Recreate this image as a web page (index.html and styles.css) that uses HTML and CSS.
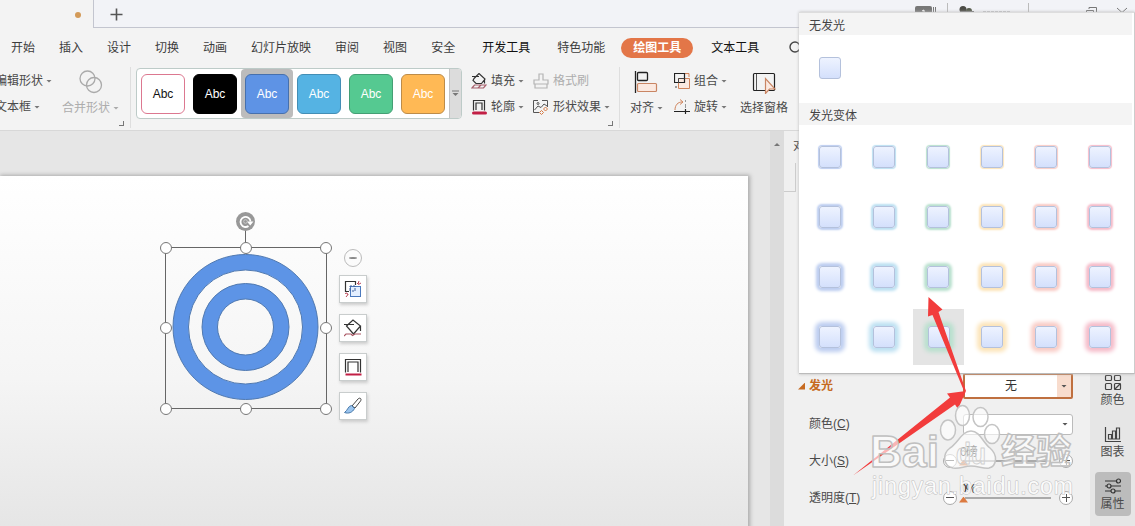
FILE: index.html
```
<!DOCTYPE html>
<html lang="zh-CN">
<head>
    <meta charset="UTF-8">
    <meta name="viewport" content="width=device-width, initial-scale=1.0">
    <title>绘图工具</title>
    <link rel="stylesheet" href="styles.css">
</head>
<body>
    <header class="titlebar">
        <div class="doc-tab"><span class="unsaved"></span></div>
        <div class="tab-strip">
            <svg class="plus" width="13" height="13"><path d="M6.5 0.5V12.5M0.5 6.5H12.5" stroke="#555" stroke-width="1.6"/></svg>
            <svg class="window-tools" width="224" height="22" fill="none">
                <rect x="4" y="6" width="17" height="14" rx="2" fill="#777"/>
                <path d="M11 11l2-1v10" stroke="#fff"/>
                <path d="M22.500 7v12M24.500 7v12" stroke="#777"/>
                <path d="M36.500 3v18M117.500 3v18" stroke="#bbb"/>
                <circle cx="52" cy="9.500" r="3.500" fill="#4b4b45"/><circle cx="58" cy="11" r="3" fill="#555b4b"/><path d="M49 12.500h14" stroke="#777" stroke-width="3"/>
                <path d="M72 12.500h28" stroke="#999" stroke-width="2" stroke-dasharray="3 1"/>
                <path d="M178 9V7.500h7.500v7h-3M175.500 10.500h7v8h-7z" stroke="#777"/>
                <path d="M206 8l10 9M216 8l-10 9" stroke="#777"/>
            </svg>
        </div>
    </header>

    <nav class="menu">
        <span>开始</span><span>插入</span><span>设计</span><span>切换</span><span>动画</span><span>幻灯片放映</span><span>审阅</span><span>视图</span><span>安全</span>
        <span class="dark wide">开发工具</span><span class="wide">特色功能</span>
        <span class="active">绘图工具</span><span class="dark">文本工具</span>
        <svg class="search" width="14" height="14" fill="none" stroke="#444" stroke-width="1.4"><circle cx="6" cy="6" r="5"/><path d="M10 10l3 3"/></svg>
    </nav>

    <section class="ribbon">
        <div class="group group-edit">
            <div class="stack">
                <div class="tool">编辑形状<i class="caret"></i></div>
                <div class="tool">文本框<i class="caret"></i></div>
            </div>
            <div class="big-tool disabled">
                <svg width="24" height="24" fill="none" stroke="#aaa" stroke-width="1.300"><circle cx="8.500" cy="8.500" r="7.500"/><circle cx="15" cy="15" r="7.500"/></svg>
                <div class="tool">合并形状<i class="caret"></i></div>
            </div>
            <i class="corner"></i>
        </div>

        <div class="gallery">
            <div class="cell"><b class="swatch pink">Abc</b></div>
            <div class="cell"><b class="swatch black">Abc</b></div>
            <div class="cell selected"><b class="swatch blue">Abc</b></div>
            <div class="cell"><b class="swatch sky">Abc</b></div>
            <div class="cell"><b class="swatch green">Abc</b></div>
            <div class="cell"><b class="swatch orange">Abc</b></div>
            <div class="more"><svg width="7" height="7"><path d="M0 1h7" stroke="#777"/><path d="M0.500 3h6l-3 3z" fill="#777"/></svg></div>
        </div>

        <div class="group group-style">
            <div class="stack">
                <div class="tool">
                    <svg width="16" height="16" fill="none" stroke="#333" stroke-width="1.200"><path d="M1 3.500h7M3 5.500l5-5 6 5.500-3.500 4.500H5L2 7.500zM13.500 6v4.500"/><path d="M1 15l2.500-3H15l-2.500 3zM7 15l3-3" stroke="#a6606c"/></svg>
                    填充<i class="caret"></i>
                </div>
                <div class="tool">
                    <svg width="16" height="16" fill="none" stroke="#333" stroke-width="1.200"><path d="M2.500 11.500V1.500h11v10M5 11V4h6v7"/><path d="M2.500 14h12" stroke="#c21f45" stroke-width="3" stroke-linecap="round"/></svg>
                    轮廓<i class="caret"></i>
                </div>
            </div>
            <div class="stack">
                <div class="tool disabled">
                    <svg width="16" height="16" fill="none" stroke="#b5b5b5" stroke-width="1.200"><path d="M6 7V1h4v6h5v4H1V7zM2 11v4h12v-4"/></svg>
                    格式刷
                </div>
                <div class="tool">
                    <svg width="16" height="16" fill="none" stroke="#555"><path d="M5 1.500H.5V13.500H6M9 1.500h5.500V8M1.500 11l3.500-4 3 1.500L11 5l3 2"/><circle cx="5" cy="4.500" r="1"/><path d="M12.500 8l2 2-2 2-2-2zM8.500 11.500l2 2-2 2-2-2z" stroke="#d57942"/></svg>
                    形状效果<i class="caret"></i>
                </div>
            </div>
            <i class="corner"></i>
        </div>

        <div class="group group-arrange">
            <div class="big-tool align">
                <svg width="24" height="24" fill="none"><path d="M1.500 1v22" stroke="#222" stroke-width="1.300"/><rect x="3.500" y="2.500" width="10" height="8" rx="1" stroke="#222" stroke-width="1.300"/><rect x="3.500" y="13.500" width="19" height="8" rx="1" fill="#fbe9e0" stroke="#c98563" stroke-width="1.200"/></svg>
                <div class="tool">对齐<i class="caret"></i></div>
            </div>
            <div class="stack">
                <div class="tool">
                    <svg width="16" height="16" fill="none"><path d="M4.500 5.500h11v10h-11zM10 .5h5V4" stroke="#d0845c" fill="#fbe9e0"/><path d="M.5.500h10v9H.5z" stroke="#222" stroke-width="1.200"/><path d="M4.500 10V5.500h6M1 14h2" stroke="#444"/></svg>
                    组合<i class="caret"></i>
                </div>
                <div class="tool">
                    <svg width="16" height="16" fill="none"><path d="M1 11C1 6 4 3 8 3M6 .5L9 3 6 5.500" stroke="#d0845c"/><path d="M0 12.500h16M11.500 10v5" stroke="#222" stroke-width="1.200"/><path d="M11.500 1v2M11.500 5v4" stroke="#999"/></svg>
                    旋转<i class="caret"></i>
                </div>
            </div>
            <div class="big-tool">
                <svg width="24" height="24" fill="none"><rect x="1.500" y="3.500" width="21" height="17" rx="1" stroke="#222" stroke-width="1.200"/><path d="M4.500 4v16" stroke="#555"/><path d="M13.500 8.500v15l4-4.500h5.500z" fill="#fbe9e0" stroke="#c98563" stroke-width="1.200"/></svg>
                <div class="tool">选择窗格</div>
            </div>
        </div>
    </section>

    <main class="workspace">
        <div class="canvas">
            <div class="slide">
                <svg class="shape" width="170" height="205" fill="none">
                    <g fill="#5d94e6" stroke="#5079b0" fill-rule="evenodd">
                        <path d="M13 122a72.500 72.500 0 1 1 145 0a72.500 72.500 0 1 1-145 0zM28.500 122a57 57 0 1 0 114 0a57 57 0 1 0-114 0z"/>
                        <path d="M42 122a43.500 43.500 0 1 1 87 0a43.500 43.500 0 1 1-87 0zM57.500 122a28 28 0 1 0 56 0a28 28 0 1 0-56 0z"/>
                    </g>
                    <path d="M5.500 42.500h161v161H5.500zM85.500 24v18" stroke="#666"/>
                    <circle cx="85.500" cy="16.500" r="9.500" fill="#989898"/>
                    <path d="M88.500 21a5 5 0 1 1 2-4.500" stroke="#fff" stroke-width="1.800"/><path d="M87 16.500h6.500l-3.300 4z" fill="#fff"/><circle cx="85.500" cy="16.500" r="1.800" stroke="#ccc"/>
                </svg>
                <i class="handle nw"></i><i class="handle n"></i><i class="handle ne"></i>
                <i class="handle w"></i><i class="handle e"></i>
                <i class="handle sw"></i><i class="handle s"></i><i class="handle se"></i>
                <div class="float-tools">
                    <span class="collapse"></span>
                    <span class="float-btn"><svg width="18" height="18" fill="none"><rect x="6.500" y="6.500" width="10" height="10" fill="#e4efff" stroke="#4b79bd"/><path d="M5 11.500H1.500v-10h10V5" stroke="#333" stroke-width="1.200"/><path d="M6 11V6h5v5H8" stroke="#3f5f9a" stroke-dasharray="3 1"/><path d="M13 3l1.500 1.500L17 3M15 1l-1 3M1 13.500l2-.500 1 2M2 17l2-2.500" stroke="#bb4658"/></svg></span>
                    <span class="float-btn"><svg width="18" height="18" fill="none"><path d="M0 5.500h10M2.500 7L9 1l7.500 6-7 8zM16.500 7v5" stroke="#333" stroke-width="1.200"/><path d="M0 17l2-2h5l1.500 1.500L11 15h6" stroke="#a95562" stroke-width="1.200"/></svg></span>
                    <span class="float-btn"><svg width="18" height="18" fill="none"><path d="M1.500 14.500V1.500h15v13M4 14V4h10v10" stroke="#333" stroke-width="1.200"/><path d="M1.500 16.500h16" stroke="#c21f45" stroke-width="2"/></svg></span>
                    <span class="float-btn"><svg width="18" height="18" fill="none"><path d="M8 9l6-7c2-2 4 0 2.500 2L11 11z" stroke="#444"/><path d="M7.500 8.500C4 9 4 13 .5 15.500c4 1.500 8 0 10-4z" fill="#9ac4ee" stroke="#4778a9"/></svg></span>
                </div>
            </div>
        </div>
        <div class="scrollbar"><i class="up"></i></div>
        <aside class="panel">
            <div class="panel-top"><span>对象属性</span><div class="panel-tab"></div></div>
            <div class="row heading"><i class="fold"></i><strong>发光</strong><div class="select open"><span>无</span><b><i class="caret"></i></b></div></div>
            <div class="row color-row"><label>颜色(<u>C</u>)</label><div class="select"><span></span><b><i class="caret"></i></b></div></div>
            <div class="row"><label>大小(<u>S</u>)</label><div class="slider"><i class="knob"></i><div class="track"><span>0磅</span></div><i class="knob add"></i></div></div>
            <div class="row"><label>透明度(<u>T</u>)</label><div class="slider"><i class="knob"></i><div class="track"><span>0%</span></div><i class="knob add"></i></div></div>
        </aside>
        <div class="sidebar">
            <div class="side-item">
                <svg width="18" height="18" fill="none" stroke="#444" stroke-width="1.200"><rect x="1.500" y="2.500" width="6" height="5" rx="1"/><rect x="10.500" y="2.500" width="6" height="5" rx="1"/><rect x="1.500" y="10.500" width="6" height="6" rx="1"/><rect x="10.500" y="10.500" width="6" height="6" rx="1"/><path d="M10.500 16.500l6-6"/></svg>
                颜色
            </div>
            <div class="side-item">
                <svg width="18" height="18" fill="none" stroke="#444" stroke-width="1.200"><path d="M1.500 2v14.500H17M4.500 14V9.500h3V14zM8.500 14V6h3v8zM12.500 14V3h3v11z"/></svg>
                图表
            </div>
            <div class="side-item current">
                <svg width="18" height="18" fill="none" stroke="#333" stroke-width="1.200"><path d="M1 4h11M1 9h2M7 9h10M1 14h6M11 14h6"/><circle cx="14.500" cy="4" r="2"/><circle cx="5" cy="9" r="2"/><circle cx="9" cy="14" r="2"/></svg>
                属性
            </div>
        </div>
    </main>

    <div class="popup">
        <div class="popup-title">无发光</div>
        <div class="none-row"><i class="glow"></i></div>
        <div class="popup-title">发光变体</div>
        <div class="glow-grid">
            <div class="c1 s1"><i class="glow"></i></div><div class="c2 s1"><i class="glow"></i></div><div class="c3 s1"><i class="glow"></i></div><div class="c4 s1"><i class="glow"></i></div><div class="c5 s1"><i class="glow"></i></div><div class="c6 s1"><i class="glow"></i></div>
            <div class="c1 s2"><i class="glow"></i></div><div class="c2 s2"><i class="glow"></i></div><div class="c3 s2"><i class="glow"></i></div><div class="c4 s2"><i class="glow"></i></div><div class="c5 s2"><i class="glow"></i></div><div class="c6 s2"><i class="glow"></i></div>
            <div class="c1 s3"><i class="glow"></i></div><div class="c2 s3"><i class="glow"></i></div><div class="c3 s3"><i class="glow"></i></div><div class="c4 s3"><i class="glow"></i></div><div class="c5 s3"><i class="glow"></i></div><div class="c6 s3"><i class="glow"></i></div>
            <div class="c1 s4"><i class="glow"></i></div><div class="c2 s4"><i class="glow"></i></div><div class="c3 s4 hovered"><i class="glow"></i></div><div class="c4 s4"><i class="glow"></i></div><div class="c5 s4"><i class="glow"></i></div><div class="c6 s4"><i class="glow"></i></div>
        </div>
    </div>

    <!-- arrows and site mark over everything -->
    <svg class="marks" width="1135" height="526">
        <g fill="#f23c3c">
            <path d="M928.500 297L942.500 309.500l-4 2.500L966 391h-2L932.500 315l-4.500 1.500z"/>
            <path d="M966 391l-19 2.500 3 4L853 475.500l102-71 3 4.500z"/>
        </g>
        <g fill="#fff" fill-opacity=".6" stroke="#c4c4c4" stroke-width="1.500">
            <ellipse cx="948" cy="430" rx="7.500" ry="10"/><ellipse cx="962.500" cy="415.500" rx="7" ry="10"/><ellipse cx="980.500" cy="417" rx="7.500" ry="9.500"/><ellipse cx="992" cy="434" rx="7.500" ry="9.500"/>
            <path d="M971 431c-9 0-13 12-21 17-8 6-7 18 3 20 7 1 11-2 18-2s13 3 18 2c8-2 9-13 1-20-7-5-10-17-19-17z"/>
        </g>
        <g class="mark-text">
            <text x="870" y="467" font-size="45" textLength="69" lengthAdjust="spacingAndGlyphs">Bai</text>
            <text class="du" x="956" y="464" font-size="29" textLength="30" lengthAdjust="spacingAndGlyphs">du</text>
            <text class="cn" x="1001" y="464" font-size="35">经验</text>
            <text class="url" x="872" y="494" font-size="23" textLength="201">jingyan.baidu.com</text>
        </g>
    </svg>
</body>
</html>
```
FILE: styles.css
```
* {
    margin: 0;
    padding: 0;
    box-sizing: border-box;
}

body {
    width: 1135px;
    height: 526px;
    overflow: hidden;
    position: relative;
    background: #f3f3f3;
    color: #4a4a4a;
    font-family: "Liberation Sans", "Noto Sans CJK SC", sans-serif;
    font-size: 12px;
    line-height: 18px;
}

i {
    font-style: normal;
}

svg {
    display: block;
    flex: none;
}

/* title bar */
.titlebar {
    display: flex;
    height: 28px;
}

.doc-tab {
    width: 93px;
    padding: 12px 0 0 75px;
}

.unsaved {
    display: block;
    width: 6px;
    height: 6px;
    border-radius: 50%;
    background: #d39a58;
}

.tab-strip {
    flex: 1;
    display: flex;
    justify-content: space-between;
    padding: 0 0 0 16px;
    background: #f2f3f7;
    border-left: 1px solid #c3c5cf;
    border-bottom: 1px solid #c3c5cf;
}

.plus {
    margin-top: 8px;
}

/* menu */
.menu {
    display: flex;
    align-items: center;
    height: 38px;
    padding: 2px 0 0 11px;
    gap: 24px;
    color: #3c3c3c;
    white-space: nowrap;
}

.menu .dark {
    color: #111;
}

.menu .wide {
    margin-left: 3px;
}

.menu .active {
    height: 20px;
    padding: 0 12px;
    margin: -1px -6px 0 -8px;
    border-radius: 10px;
    background: #e37648;
    color: #fff;
    font-weight: bold;
    line-height: 20px;
}

.search {
    margin-left: 6px;
}

/* ribbon */
.ribbon {
    display: flex;
    height: 65px;
    border-bottom: 1px solid #d8d8d8;
}

.group {
    position: relative;
    display: flex;
    height: 61px;
    margin-top: 1px;
    border-right: 1px solid #dedede;
}

.group-edit {
    width: 131px;
}

.group-edit .stack {
    width: 62px;
    margin-left: -5px;
}

.group-edit .big-tool {
    margin-left: 5px;
}

.stack {
    display: flex;
    flex-direction: column;
    padding-top: 5px;
    gap: 8px;
}

.tool {
    display: flex;
    align-items: center;
    gap: 4px;
    height: 18px;
    white-space: nowrap;
}

.big-tool {
    display: flex;
    flex-direction: column;
    align-items: center;
    padding-top: 3px;
    gap: 5px;
}

.disabled {
    color: #adadad;
}

.caret {
    width: 6px;
    height: 3px;
    margin-left: -1px;
    background: #777;
    clip-path: polygon(0 0, 100% 0, 50% 100%);
    flex: none;
}

.disabled .caret {
    background: #aaa;
}

.corner {
    position: absolute;
    right: 6px;
    bottom: 2px;
    width: 5px;
    height: 5px;
    border-right: 1px solid #777;
    border-bottom: 1px solid #777;
}

.gallery {
    display: flex;
    width: 326px;
    height: 51px;
    margin: 2px 9px 0 5px;
    border: 1px solid #bdcbc8;
    border-radius: 4px;
    background: #fff;
    overflow: hidden;
}

.cell {
    width: 52px;
    padding: 5px 4px;
}

.selected {
    background: #bcbcbc;
    border-radius: 4px;
}

.swatch {
    display: block;
    width: 44px;
    height: 40px;
    border: 1.5px solid #888;
    border-radius: 6px;
    color: #fff;
    font-weight: normal;
    font-size: 12px;
    line-height: 38px;
    text-align: center;
}

.pink {
    border-color: #dc7890;
    color: #111;
}

.black {
    background: #000;
    border-color: #000;
}

.blue {
    background: #5e93e5;
    border-color: #4670ad;
}

.sky {
    background: #55b3e3;
    border-color: #438eb5;
}

.green {
    background: #55c991;
    border-color: #449f74;
}

.orange {
    background: #ffb955;
    border-color: #bd8c49;
}

.more {
    display: flex;
    align-items: center;
    justify-content: center;
    flex: 1;
    background: #dcdcdc;
    border-left: 1px solid #c4c4c4;
}

.group-style {
    width: 149px;
}

.group-style .stack {
    width: 62px;
}

.group-arrange {
    border: 0;
    padding-left: 10px;
}

.align {
    width: 35px;
    align-items: flex-start;
}

.align svg {
    margin-left: 4px;
}

.group-arrange .stack {
    width: 66px;
    margin-left: 9px;
}

/* workspace */
.workspace {
    display: flex;
    height: 395px;
}

.canvas {
    width: 770px;
    padding-top: 45px;
    background: #e6e6e6;
    overflow: hidden;
}

.slide {
    position: relative;
    width: 748px;
    height: 405px;
    background: linear-gradient(#fff, #f5f5f5 50%, #e0e0e0);
    box-shadow: 1px 0 4px 1px #aaa;
}

.shape {
    position: absolute;
    left: 160px;
    top: 29px;
}

.handle {
    position: absolute;
    width: 12px;
    height: 12px;
    border: 1px solid #777;
    border-radius: 50%;
    background: #fff;
}

.nw, .w, .sw {
    left: 160px;
}

.n, .s {
    left: 240px;
}

.ne, .e, .se {
    left: 320px;
}

.nw, .n, .ne {
    top: 66px;
}

.w, .e {
    top: 146px;
}

.sw, .s, .se {
    top: 227px;
}

.float-tools {
    position: absolute;
    left: 339px;
    top: 73px;
    display: flex;
    flex-direction: column;
    align-items: center;
    gap: 11px;
}

.collapse {
    width: 18px;
    height: 18px;
    margin-bottom: -3px;
    padding: 7px 4px;
    border: 1px solid #bbb;
    border-radius: 50%;
    background: #888 content-box;
}

.float-btn {
    display: flex;
    align-items: center;
    justify-content: center;
    width: 28px;
    height: 28px;
    border: 1px solid #c9cdcd;
    background: #fff;
    box-shadow: 1px 2px 3px #ccc;
}

.scrollbar {
    width: 14px;
    padding: 12px 4px;
    background: #dcdcdc;
}

.up {
    display: block;
    width: 6px;
    height: 3px;
    background: #777;
    clip-path: polygon(50% 0, 100% 100%, 0 100%);
}

/* properties panel */
.panel {
    width: 306px;
    background: #f0f0f0;
}

.panel-top {
    height: 242px;
    padding: 6px 0 0 9px;
}

.panel-tab {
    width: 12px;
    height: 29px;
    margin: 8px 0 0 -9px;
    border-right: 1px solid #ccc;
    border-bottom: 1px solid #ccc;
}

.row {
    display: flex;
    align-items: center;
    justify-content: space-between;
    height: 37px;
    padding: 0 17px 0 25px;
}

.heading {
    height: 26px;
    padding-left: 14px;
    color: #c66a20;
}

.fold {
    width: 7px;
    height: 7px;
    background: #c66a20;
    clip-path: polygon(100% 0, 100% 100%, 0 100%);
}

.heading strong {
    flex: 1;
    margin-left: 4px;
}

.color-row {
    height: 43px;
    padding-top: 7px;
}

.select {
    display: flex;
    width: 110px;
    height: 21px;
    border: 1px solid #bbb;
    border-radius: 3px;
    background: #fff;
    overflow: hidden;
}

.select span {
    flex: 1;
    text-align: center;
    color: #333;
    line-height: 22px;
}

.select b {
    display: flex;
    align-items: center;
    justify-content: center;
    width: 14px;
}

.select .caret {
    margin: 0;
    background: #555;
}

.open {
    height: 26px;
    border: 2px solid #bf7040;
    border-radius: 2px;
}

.open b {
    background: #f8dccd;
}

.slider {
    display: flex;
    align-items: center;
    width: 130px;
    gap: 8px;
}

.knob {
    width: 14px;
    height: 14px;
    border: 1px solid #aaa;
    border-radius: 50%;
    background: linear-gradient(#555, #555) center / 8px 1px no-repeat #fff;
}

.add {
    background: linear-gradient(#555, #555) center / 8px 1px no-repeat, linear-gradient(#555, #555) center / 1px 8px no-repeat, #fff;
}

.track {
    position: relative;
    flex: 1;
    height: 2px;
    background: #aaa;
}

.track span {
    position: absolute;
    left: -5px;
    top: -17px;
    color: #222;
    letter-spacing: -1px;
}

.track::after {
    content: '';
    position: absolute;
    left: -6px;
    top: 0;
    width: 9px;
    height: 6px;
    background: #dc7a40;
    clip-path: polygon(50% 0, 100% 100%, 0 100%);
}

.sidebar {
    display: flex;
    flex-direction: column;
    align-items: center;
    width: 45px;
    padding-top: 238px;
    gap: 8px;
    background: #e6e6e6;
}

.side-item {
    display: flex;
    flex-direction: column;
    align-items: center;
    width: 36px;
    height: 44px;
    padding-top: 4px;
}

.current {
    margin-top: -1px;
    border-radius: 4px;
    background: #bcbcbc;
    padding-top: 5px;
}

/* glow list */
.popup {
    position: absolute;
    left: 799px;
    top: 12px;
    width: 336px;
    height: 362px;
    border-top: 1px solid #ddd;
    border-right: 1px solid #ccc;
    border-bottom: 1px solid #bbb;
    background: #fff;
    box-shadow: 0 0 3px #bbb;
}

.popup-title {
    height: 22px;
    width: 333px;
    padding-left: 10px;
    background: #f4f4f4;
    color: #444;
    line-height: 26px;
}

.none-row {
    height: 68px;
    padding: 22px 0 0 20px;
}

.glow {
    display: block;
    width: 22px;
    height: 22px;
    border: 1px solid #b4c1dc;
    border-radius: 3px;
    background: linear-gradient(#eef3ff, #d4e0fc);
}

.glow-grid {
    display: grid;
    grid-template-columns: repeat(6, 54px);
    grid-auto-rows: 60px;
    padding: 2px 0 0 4px;
}

.glow-grid div {
    display: flex;
    align-items: center;
    justify-content: center;
}

.c1 { --glow: #bccdf0; }
.c2 { --glow: #bce0f2; }
.c3 { --glow: #b8e0ce; }
.c4 { --glow: #fce4b8; }
.c5 { --glow: #f9cbc5; }
.c6 { --glow: #f5bbc9; }

.s1 .glow { box-shadow: 0 0 1px 1px var(--glow); }
.s2 .glow { box-shadow: 0 0 2px 2px var(--glow); }
.s3 .glow { box-shadow: 0 0 3px 3px var(--glow); }
.s4 .glow { box-shadow: 0 0 4px 4px var(--glow); }

.glow-grid .hovered {
    width: 51px;
    height: 56px;
    margin: 2px;
    background: #e4e4e4;
}

.marks {
    position: absolute;
    left: 0;
    top: 0;
    pointer-events: none;
}

.mark-text {
    font-family: "Liberation Sans", sans-serif;
    font-weight: bold;
    fill: rgba(255, 255, 255, 0.65);
    stroke: #c0c0c0;
    stroke-width: 1.5px;
    stroke-linejoin: round;
}

.mark-text .du {
    fill: none;
    stroke: #d0d0d0;
    stroke-width: 1px;
}

.mark-text .cn {
    font-family: "Noto Sans CJK SC", sans-serif;
}

.mark-text .url {
    font-weight: normal;
    fill: rgba(255, 255, 255, 0.9);
    stroke-width: 1px;
    paint-order: stroke;
}
```
